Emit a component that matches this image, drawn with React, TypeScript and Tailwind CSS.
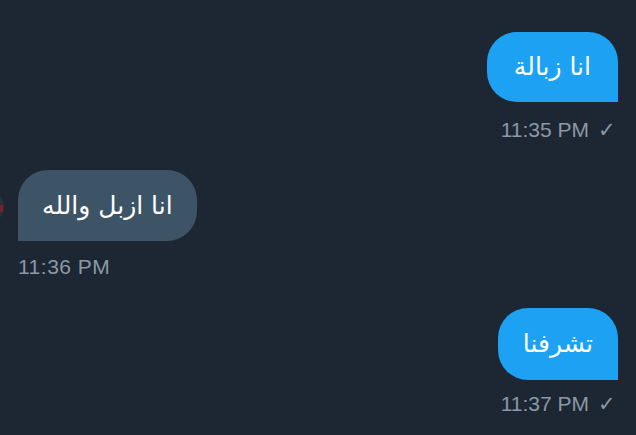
export default function App() {
  const time = "text-[21px] leading-[24px] text-[#8b98a5] font-['Liberation_Sans',Arial,sans-serif]";
  const arabic = "text-[25px] leading-[32px] text-white font-['DejaVu_Sans',sans-serif]";
  return (
    <div className="relative w-[636px] h-[435px] overflow-hidden bg-[#1c2733]">
      {/* cut-off avatar at the left edge */}
      <div className="absolute left-[-30px] top-[190px] w-[34px] h-[34px] rounded-full bg-[#2a2f38]">
        <div className="absolute right-[1px] top-[15px] w-[4px] h-[7px] bg-[#7a1f24]" />
      </div>

      <div className="flex flex-col pt-[32px]">
        {/* sent 1 */}
        <div className="flex flex-col items-end pr-[18px]">
          <div
            dir="rtl"
            className={`h-[70px] px-[27px] flex items-center rounded-[30px] rounded-br-none bg-[#1da1f2] ${arabic}`}
          >
            انا زبالة
          </div>
          <div className={`mt-[16px] mr-[2px] flex items-center gap-[9px] ${time}`}>
            <span>11:35 PM</span>
            <span className="text-[21px]">✓</span>
          </div>
        </div>

        {/* received */}
        <div className="flex flex-col items-start pl-[18px] mt-[28px]">
          <div
            dir="rtl"
            className={`h-[71px] px-[24px] flex items-center rounded-[30px] rounded-bl-none bg-[#3d5466] ${arabic}`}
          >
            انا ازبل والله
          </div>
          <div className={`mt-[14px] tracking-[0.5px] ${time}`}>11:36 PM</div>
        </div>

        {/* sent 2 */}
        <div className="flex flex-col items-end pr-[18px] mt-[29px]">
          <div
            dir="rtl"
            className={`h-[72px] px-[25px] flex items-center rounded-[30px] rounded-br-none bg-[#1da1f2] ${arabic}`}
          >
            تشرفنا
          </div>
          <div className={`mt-[12px] mr-[2px] flex items-center gap-[9px] ${time}`}>
            <span>11:37 PM</span>
            <span className="text-[21px]">✓</span>
          </div>
        </div>
      </div>
    </div>
  );
}
